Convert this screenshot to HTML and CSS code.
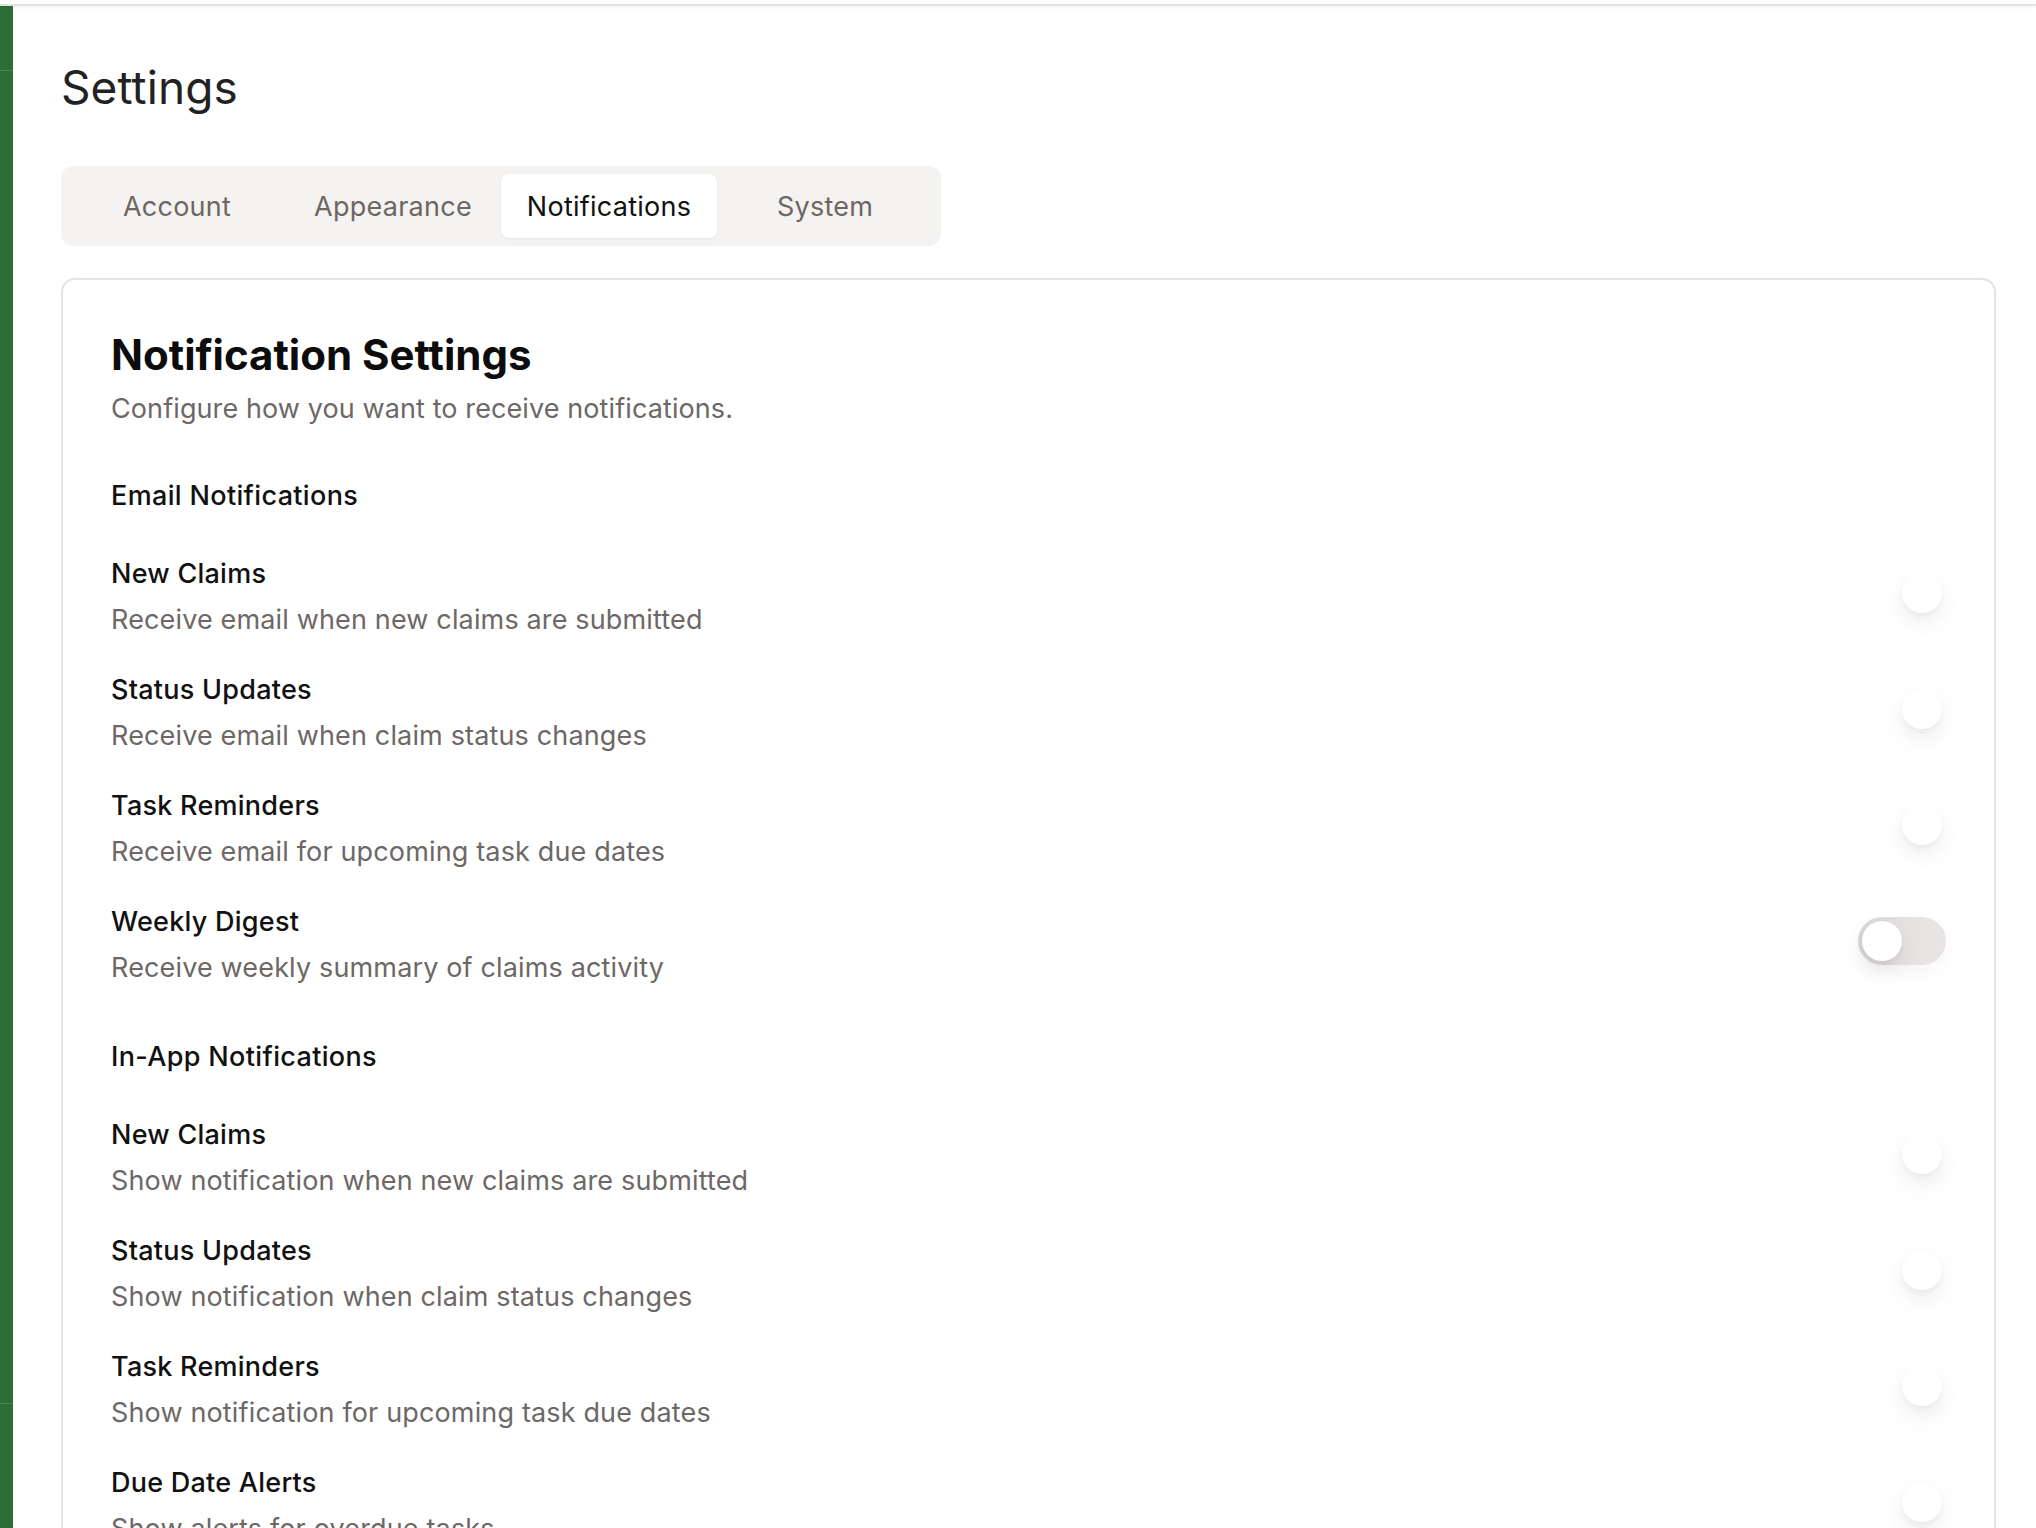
FILE: index.html
```html
<!DOCTYPE html>
<html lang="en">
<head>
<meta charset="utf-8">
<title>Settings</title>
<link rel="stylesheet" href="styles.css">
</head>
<body>
<div class="topbar"></div>
<div class="layout">
  <aside class="sidebar">
    <div class="sidebar-head"></div>
    <div class="sidebar-body"></div>
    <div class="sidebar-foot"></div>
  </aside>
  <main class="main">
    <h1 class="page-title">Settings</h1>
    <nav class="tabs">
      <div class="tab">Account</div>
      <div class="tab">Appearance</div>
      <div class="tab active">Notifications</div>
      <div class="tab">System</div>
    </nav>
    <section class="card">
      <h2 class="card-title">Notification Settings</h2>
      <p class="card-desc">Configure how you want to receive notifications.</p>

      <div class="section">
        <h3 class="section-title">Email Notifications</h3>
        <div class="rows">
          <div class="row">
            <div class="row-text">
              <div class="row-title">New Claims</div>
              <div class="row-desc">Receive email when new claims are submitted</div>
            </div>
            <div class="switch on"><span class="knob"></span></div>
          </div>
          <div class="row">
            <div class="row-text">
              <div class="row-title">Status Updates</div>
              <div class="row-desc">Receive email when claim status changes</div>
            </div>
            <div class="switch on"><span class="knob"></span></div>
          </div>
          <div class="row">
            <div class="row-text">
              <div class="row-title">Task Reminders</div>
              <div class="row-desc">Receive email for upcoming task due dates</div>
            </div>
            <div class="switch on"><span class="knob"></span></div>
          </div>
          <div class="row">
            <div class="row-text">
              <div class="row-title">Weekly Digest</div>
              <div class="row-desc">Receive weekly summary of claims activity</div>
            </div>
            <div class="switch off"><span class="knob"></span></div>
          </div>
        </div>
      </div>

      <div class="section">
        <h3 class="section-title">In-App Notifications</h3>
        <div class="rows">
          <div class="row">
            <div class="row-text">
              <div class="row-title">New Claims</div>
              <div class="row-desc">Show notification when new claims are submitted</div>
            </div>
            <div class="switch on"><span class="knob"></span></div>
          </div>
          <div class="row">
            <div class="row-text">
              <div class="row-title">Status Updates</div>
              <div class="row-desc">Show notification when claim status changes</div>
            </div>
            <div class="switch on"><span class="knob"></span></div>
          </div>
          <div class="row">
            <div class="row-text">
              <div class="row-title">Task Reminders</div>
              <div class="row-desc">Show notification for upcoming task due dates</div>
            </div>
            <div class="switch on"><span class="knob"></span></div>
          </div>
          <div class="row">
            <div class="row-text">
              <div class="row-title">Due Date Alerts</div>
              <div class="row-desc">Show alerts for overdue tasks</div>
            </div>
            <div class="switch on"><span class="knob"></span></div>
          </div>
        </div>
      </div>
    </section>
  </main>
</div>
</body>
</html>
```
FILE: styles.css
```css
html, body {
  margin: 0;
  height: 100%;
}
body {
  font-family: Inter, "Noto Sans", "Liberation Sans", sans-serif;
  background: #ffffff;
  overflow: hidden;
}
.topbar {
  height: 4px;
  border-bottom: 2px solid #e2e2e2;
  box-shadow: 0 1px 4px rgba(0, 0, 0, 0.05);
  position: relative;
  z-index: 1;
}
.layout {
  display: flex;
  height: calc(100vh - 6px);
}
.sidebar {
  width: 13px;
  flex: none;
  background: #2c6e36;
  display: flex;
  flex-direction: column;
}
.sidebar-head {
  height: 64px;
  border-bottom: 1px solid rgba(255, 255, 255, 0.14);
}
.sidebar-body {
  flex: 1;
}
.sidebar-foot {
  height: 124px;
  border-top: 1px solid rgba(255, 255, 255, 0.14);
}
.main {
  flex: 1;
  min-width: 0;
  padding: 54px 40px 0 48px;
  overflow: hidden;
}
.page-title {
  margin: 0 0 52px;
  font-size: 46px;
  line-height: 54px;
  font-weight: 400;
  color: #222222;
  letter-spacing: 0.1px;
}
.tabs {
  display: grid;
  width: max-content;
  grid-template-columns: repeat(4, 216px);
  padding: 8px;
  background: #f4f3f1;
  border-radius: 12px;
}
.tab {
  height: 64px;
  display: flex;
  align-items: center;
  justify-content: center;
  font-size: 27px;
  letter-spacing: 0.25px;
  color: #6e6662;
  border-radius: 8px;
}
.tab.active {
  background: #ffffff;
  color: #111111;
  box-shadow: 0 1px 3px rgba(0, 0, 0, 0.06);
}
.card {
  margin-top: 32px;
  border: 2px solid #e6e3e1;
  border-radius: 14px;
  padding: 48px 48px 48px 48px;
}
.card-title {
  margin: 0;
  font-size: 42px;
  line-height: 53px;
  font-weight: 700;
  letter-spacing: 0;
  color: #0c0c0c;
}
.card-desc {
  margin: 8px 0 0;
  font-size: 27px;
  line-height: 40px;
  letter-spacing: 0.1px;
  color: #6d6866;
}
.section {
  margin-top: 47px;
}
.section + .section {
  margin-top: 49px;
}
.section-title {
  margin: 0 0 38px;
  font-size: 27px;
  line-height: 40px;
  font-weight: 500;
  letter-spacing: 0.35px;
  color: #111111;
}
.rows {
  display: flex;
  flex-direction: column;
  gap: 30px;
}
.row {
  display: flex;
  align-items: center;
  justify-content: space-between;
}
.row-title {
  font-size: 27px;
  line-height: 40px;
  font-weight: 500;
  letter-spacing: 0.25px;
  color: #111111;
}
.row-desc {
  margin-top: 6px;
  font-size: 27px;
  line-height: 40px;
  letter-spacing: 0.15px;
  color: #6d6866;
}
.switch {
  width: 88px;
  height: 48px;
  border-radius: 24px;
  padding: 4px;
  box-sizing: border-box;
  display: flex;
  flex: none;
  margin-bottom: 8px;
}
.switch.off {
  background: linear-gradient(90deg, #dad6d5 0%, #e5e2e1 55%, #e8e5e4 100%);
  box-shadow: 0 8px 18px rgba(0, 0, 0, 0.04);
}
.switch.on {
  justify-content: flex-end;
  background: transparent;
}
.knob {
  width: 40px;
  height: 40px;
  border-radius: 50%;
  background: #ffffff;
  box-shadow: 0 10px 22px rgba(0, 0, 0, 0.07), 0 3px 6px rgba(0, 0, 0, 0.04);
}
```
